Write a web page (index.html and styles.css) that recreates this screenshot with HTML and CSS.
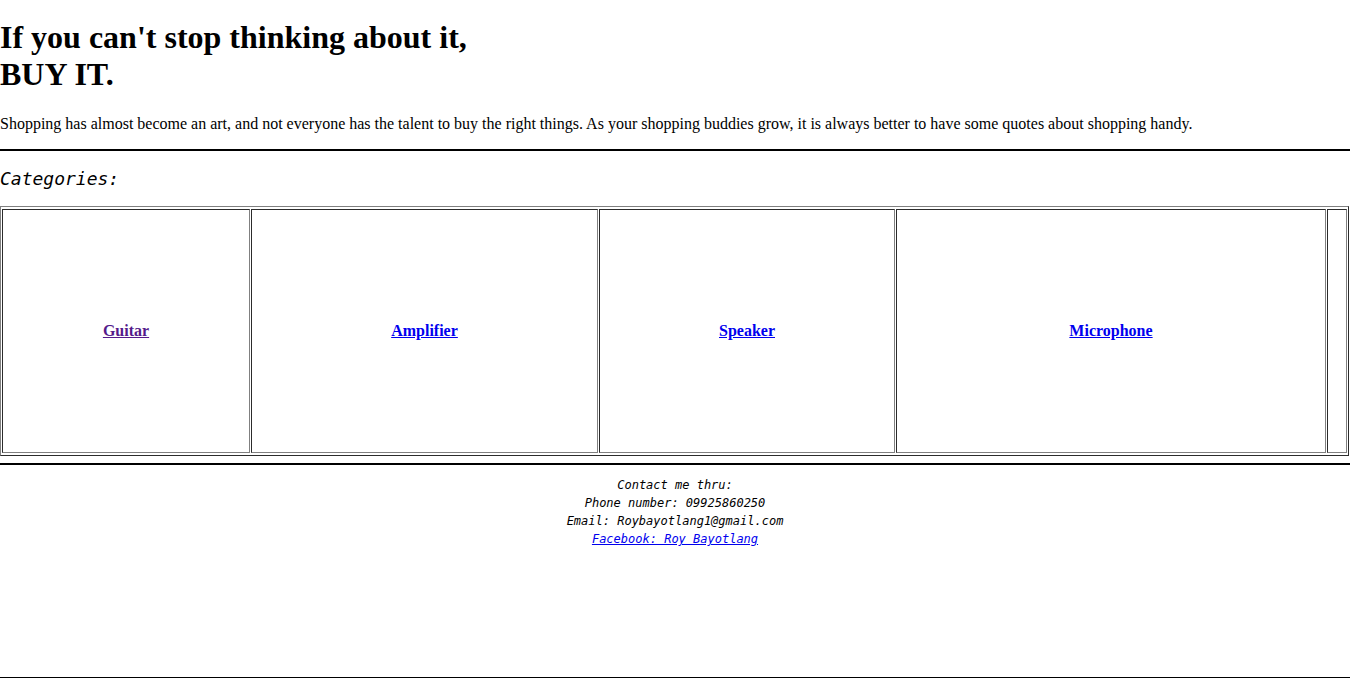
FILE: index.html
```html
<!DOCTYPE html>
<html>
<head>
<meta charset="utf-8">
<title>Shop</title>
<link rel="stylesheet" href="styles.css">
</head>
<body>
<h1 class="title">If you can't stop thinking about it,<br>BUY IT.</h1>
<p class="intro">Shopping has almost become an art, and not everyone has the talent to buy the right things. As your shopping buddies grow, it is always better to have some quotes about shopping handy.</p>
<hr class="rule rule-top">
<h3 class="cat-title">Categories:</h3>
<table class="cats">
<tr>
<td class="c1"><a class="visited" href="#guitar">Guitar</a></td>
<td class="c2"><a href="#amplifier">Amplifier</a></td>
<td class="c3"><a href="#speaker">Speaker</a></td>
<td class="c4"><a href="#microphone">Microphone</a></td>
<td class="c5"></td>
</tr>
</table>
<hr class="rule rule-mid">
<footer class="contact">
<div>Contact me thru:</div>
<div>Phone number: 09925860250</div>
<div>Email: Roybayotlang1@gmail.com</div>
<div><a href="#fb">Facebook: Roy Bayotlang</a></div>
</footer>
<hr class="rule rule-bottom">
</body>
</html>
```

FILE: styles.css
```css
html, body {
  margin: 0;
  padding: 0;
  background: #fff;
  color: #000;
}
body {
  font-family: "Liberation Serif", "Times New Roman", serif;
  font-size: 16px;
}
.title {
  margin: 19px 0 0 0;
  font-size: 32px;
  line-height: 37px;
  font-weight: bold;
}
.intro {
  margin: 22px 0 0 0;
  line-height: 18px;
}
.rule {
  border: 0;
  height: 2px;
  background: #000;
  margin: 0;
}
.rule-top {
  margin-top: 16px;
}
.cat-title {
  margin: 17px 0 0 0;
  font-family: "DejaVu Sans Mono", monospace;
  font-style: italic;
  font-weight: normal;
  font-size: 18px;
  line-height: 21px;
}
.cats {
  margin-top: 17px;
  width: 1349px;
  table-layout: fixed;
  border: 1px outset #808080;
  border-spacing: 1px 2px;
}
.cats td {
  box-sizing: border-box;
  height: 244px;
  border: 1px inset #808080;
  text-align: center;
  vertical-align: middle;
  padding: 1px;
}
.cats td a {
  font-weight: bold;
  color: #0000ee;
}
.cats td a.visited {
  color: #551a8b;
}
.c1 { width: 248px; }
.c2 { width: 347px; }
.c3 { width: 296px; }
.c4 { width: 430px; }
.c5 { width: 20px; }
.rule-mid {
  margin-top: 7px;
}
.contact {
  margin-top: 11px;
  text-align: center;
  font-family: "DejaVu Sans Mono", monospace;
  font-style: italic;
  font-size: 12px;
  line-height: 18px;
}
.contact a {
  color: #0000ee;
}
.rule-bottom {
  margin-top: 129px;
}
```
